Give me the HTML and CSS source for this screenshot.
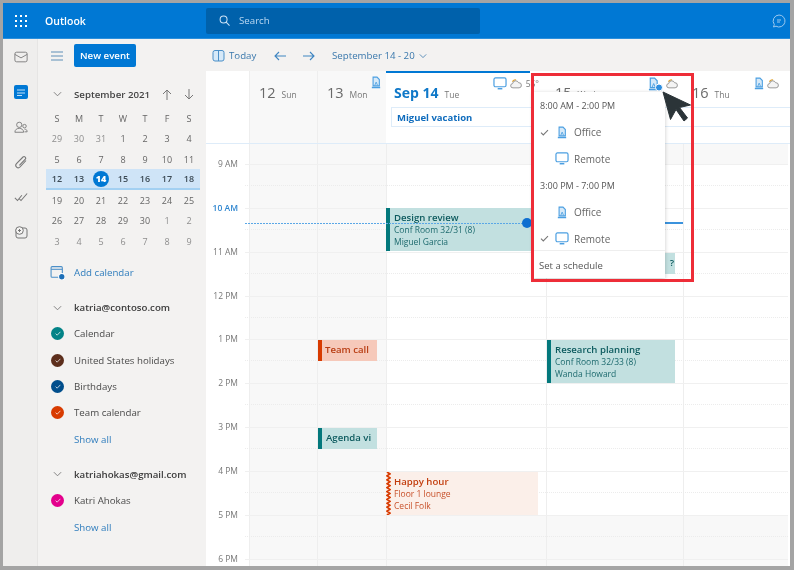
FILE: index.html
```html
<!DOCTYPE html>
<html lang="en">

<head>
  <meta charset="UTF-8">
  <title>Outlook calendar</title>
  <link rel="stylesheet" href="styles.css">
</head>

<body>
  <!-- Iconos reutilizados -->
  <svg class="defs" aria-hidden="true">
    <symbol id="office" viewBox="0 0 12 15">
      <path d="M2.500 1h4.700L10 4v7.500H2.500z" fill="#d6e9f8" stroke="#4b9fe1" stroke-width="1.300" />
      <path d="M1 13.500h10" stroke="#4b9fe1" stroke-width="1.800" />
      <path d="M4.500 11l1.700-4 1.700 4" fill="none" stroke="#4b9fe1" />
    </symbol>
    <symbol id="monitor" viewBox="0 0 15 14">
      <rect x="1" y="1" width="13" height="9.500" rx="1.600" fill="#fff" stroke="#4b9fe1" stroke-width="1.300" />
      <path d="M5 12.600h5" stroke="#4b9fe1" stroke-width="1.600" />
    </symbol>
    <symbol id="cloud" viewBox="0 0 14 11">
      <path d="M3 3a3 3 0 0 1 4-2" fill="none" stroke="#e0a32e" stroke-width="1.400" />
      <path d="M3.500 10a2.500 2.500 0 0 1-.4-5A3.600 3.600 0 0 1 10 4a3 3 0 0 1 .6 6z" fill="#f4f4f4" stroke="#8a8a8a" />
    </symbol>
    <symbol id="chev" viewBox="0 0 10 6">
      <path d="M1 1l4 4 4-4" fill="none" stroke="currentColor" stroke-width="1" />
    </symbol>
    <symbol id="tick" viewBox="0 0 10 8">
      <path d="M1 4.200l2.600 2.600L9 1.200" fill="none" stroke="currentColor" stroke-width="1.200" />
    </symbol>
  </svg>

  <div class="app">
    <header class="topbar">
      <svg class="waffle" viewBox="0 0 12 12" fill="#fff">
        <rect x="0" y="0" width="2" height="2" /><rect x="5" y="0" width="2" height="2" /><rect x="10" y="0" width="2" height="2" />
        <rect x="0" y="5" width="2" height="2" /><rect x="5" y="5" width="2" height="2" /><rect x="10" y="5" width="2" height="2" />
        <rect x="0" y="10" width="2" height="2" /><rect x="5" y="10" width="2" height="2" /><rect x="10" y="10" width="2" height="2" />
      </svg>
      <span class="brand">Outlook</span>
      <div class="search">
        <svg viewBox="0 0 12 12" fill="none" stroke="#cfe4f7" stroke-width="1.100">
          <circle cx="5" cy="5" r="3.800" /><path d="M7.800 7.800L11.500 11.500" />
        </svg>
        <span>Search</span>
      </div>
      <svg class="chat" viewBox="0 0 14 14" fill="none" stroke="#9cc8ee" stroke-width="1">
        <path d="M7 1a6 6 0 1 1-3 11.200L1.500 13l.8-2.500A6 6 0 0 1 7 1z" /><path d="M5 6h4M5 8h3" />
      </svg>
    </header>

    <div class="workspace">
      <nav class="rail">
        <svg viewBox="0 0 16 14" fill="none" stroke="#777"><rect x="1" y="1.500" width="14" height="11" rx="2" /><path d="M1 4l7 4 7-4" /></svg>
        <svg viewBox="0 0 14 14"><rect width="14" height="14" rx="2" fill="#0078d4" /><path d="M3 5h8M3 8h8M3 10.500h5" stroke="#bfe0f8" /></svg>
        <svg viewBox="0 0 16 14" fill="none" stroke="#777"><circle cx="6" cy="4.500" r="3" /><path d="M1 13c0-6 10-6 10 0z" /><circle cx="12" cy="6" r="2" /><path d="M12 9.500c2 0 3 1 3 3h-3" /></svg>
        <svg viewBox="0 0 14 14" fill="none" stroke="#777" stroke-width="1.100"><path d="M12 5.500L6 12a2.400 2.400 0 0 1-3.500-3.300L9 2a1.600 1.600 0 0 1 2.300 2.200L5.400 10.300" /></svg>
        <svg viewBox="0 0 16 14" fill="none" stroke="#777" stroke-width="1.200"><path d="M1 8l3 3 5-6M6 9l2 2 7-8" /></svg>
        <svg viewBox="0 0 14 14" fill="none" stroke="#777"><rect x="2" y="3" width="11" height="10" rx="2" fill="#eee" /><circle cx="5.500" cy="5.500" r="3.800" fill="#f4f3f2" /><path d="M4 5.500h3M5.500 4v3" /></svg>
      </nav>

      <aside class="sidebar">
        <div class="side-tools">
          <svg class="burger" viewBox="0 0 12 10" stroke="#5f8fb8"><path d="M0 1h12M0 5h12M0 9h12" /></svg>
          <button class="new-event" type="button">New event</button>
        </div>

        <div class="month-head">
          <svg class="chev"><use href="#chev" /></svg>
          <strong>September 2021</strong>
          <span class="arrows">
            <svg viewBox="0 0 10 11" fill="none" stroke="#777"><path d="M5 11V1M1 5l4-4 4 4" /></svg>
            <svg viewBox="0 0 10 11" fill="none" stroke="#777"><path d="M5 0v10M1 6l4 4 4-4" /></svg>
          </span>
        </div>

        <div class="mini-cal">
          <span>S</span><span>M</span><span>T</span><span>W</span><span>T</span><span>F</span><span>S</span>
          <span class="off">29</span><span class="off">30</span><span class="off">31</span><span>1</span><span>2</span><span>3</span><span>4</span>
          <span>5</span><span>6</span><span>7</span><span>8</span><span>9</span><span>10</span><span>11</span>
          <div class="cur-week">
            <span>12</span><span>13</span><span><b>14</b></span><span>15</span><span>16</span><span>17</span><span>18</span>
          </div>
          <span>19</span><span>20</span><span>21</span><span>22</span><span>23</span><span>24</span><span>25</span>
          <span>26</span><span>27</span><span>28</span><span>29</span><span>30</span><span class="off">1</span><span class="off">2</span>
          <span class="off">3</span><span class="off">4</span><span class="off">5</span><span class="off">6</span><span class="off">7</span><span class="off">8</span><span class="off">9</span>
        </div>

        <div class="add-cal">
          <svg viewBox="0 0 14 14" fill="none" stroke="#4b8fc8">
            <rect x="1" y="1.500" width="10.500" height="10" rx="1" /><path d="M1 4h10.500" />
            <circle cx="11" cy="11" r="3" fill="#1d6fb8" stroke="#fff" />
          </svg>
          <a>Add calendar</a>
        </div>

        <div class="account first">
          <svg class="chev"><use href="#chev" /></svg>
          <strong>katria@contoso.com</strong>
        </div>
        <ul class="cal-list">
          <li><span class="dot teal"><svg><use href="#tick" /></svg></span>Calendar</li>
          <li><span class="dot brown"><svg><use href="#tick" /></svg></span>United States holidays</li>
          <li><span class="dot navy"><svg><use href="#tick" /></svg></span>Birthdays</li>
          <li><span class="dot orange"><svg><use href="#tick" /></svg></span>Team calendar</li>
          <li class="show-all"><a>Show all</a></li>
        </ul>

        <div class="account">
          <svg class="chev"><use href="#chev" /></svg>
          <strong>katriahokas@gmail.com</strong>
        </div>
        <ul class="cal-list">
          <li><span class="dot pink"><svg><use href="#tick" /></svg></span>Katri Ahokas</li>
          <li class="show-all"><a>Show all</a></li>
        </ul>
      </aside>

      <main class="calendar">
        <div class="cal-tools">
          <svg class="today-icon" viewBox="0 0 13 13" fill="none" stroke="#4b8fc8"><rect x="1" y="1.500" width="11" height="10.500" rx="2" fill="#d6e9f8" /><path d="M6.500 1.500V12" /></svg>
          <span class="today">Today</span>
          <svg class="nav-arrow prev" viewBox="0 0 12 10" fill="none" stroke="#3f85c2" stroke-width="1.100"><path d="M12 5H1M5 1L1 5l4 4" /></svg>
          <svg class="nav-arrow" viewBox="0 0 12 10" fill="none" stroke="#3f85c2" stroke-width="1.100"><path d="M0 5h11M7 1l4 4-4 4" /></svg>
          <span class="range">September 14 - 20</span>
          <svg class="chev range-chev"><use href="#chev" /></svg>
        </div>

        <div class="week">
          <div class="week-head">
            <div class="head-day blank"></div>
            <div class="head-day weekend"><em>12</em><small>Sun</small></div>
            <div class="head-day weekend"><em>13</em><small>Mon</small>
              <svg class="ic office-ic"><use href="#office" /></svg>
            </div>
            <div class="head-day today-col"><em>Sep 14</em><small>Tue</small>
              <span class="head-icons">
                <svg class="ic monitor-ic"><use href="#monitor" /></svg>
                <svg class="ic cloud-ic"><use href="#cloud" /></svg>
                <small class="temp">55°</small>
              </span>
            </div>
            <div class="head-day wed-col"><em>15</em><small>Wed</small>
              <span class="head-icons">
                <svg class="ic wed-office" viewBox="0 0 15 14"><use href="#office" width="11" height="14" /><circle cx="11" cy="10.500" r="3.500" fill="#2f8fe0" stroke="#fff" /></svg>
                <svg class="ic cloud-ic"><use href="#cloud" /></svg>
              </span>
            </div>
            <div class="head-day thu-col"><em>16</em><small>Thu</small>
              <span class="head-icons">
                <svg class="ic office-ic"><use href="#office" /></svg>
                <svg class="ic cloud-ic"><use href="#cloud" /></svg>
              </span>
            </div>
            <div class="allday"><span>Miguel vacation</span></div>
          </div>

          <div class="week-body">
            <div class="cols">
              <div class="col time-col"></div>
              <div class="col c-sun"></div>
              <div class="col c-mon"></div>
              <div class="col c-tue"></div>
              <div class="col c-wed"></div>
              <div class="col c-thu"></div>
            </div>

            <div class="hours">
              <div class="hour"><span>9 AM</span><div class="rule"></div></div>
              <div class="hour now"><span>10 AM</span><div class="rule"></div></div>
              <div class="hour"><span>11 AM</span><div class="rule"></div></div>
              <div class="hour"><span>12 PM</span><div class="rule"></div></div>
              <div class="hour"><span>1 PM</span><div class="rule"></div></div>
              <div class="hour"><span>2 PM</span><div class="rule"></div></div>
              <div class="hour"><span>3 PM</span><div class="rule"></div></div>
              <div class="hour"><span>4 PM</span><div class="rule"></div></div>
              <div class="hour"><span>5 PM</span><div class="rule"></div></div>
              <div class="hour"><span>6 PM</span><div class="rule"></div></div>
            </div>

            <!-- Eventos: su posicion es la hora y el dia -->
            <div class="event teal-ev ev-design"><b>Design review</b><span>Conf Room 32/31 (8)</span><span>Miguel Garcia</span></div>
            <div class="event teal-ev ev-hidden"><b>?</b></div>
            <div class="event red-ev ev-team"><b>Team call</b></div>
            <div class="event teal-ev ev-agenda"><b>Agenda vi</b></div>
            <div class="event teal-ev ev-research"><b>Research planning</b><span>Conf Room 32/33 (8)</span><span>Wanda Howard</span></div>
            <div class="event tent-ev ev-happy">
              <svg class="zigzag" viewBox="0 0 5 44" preserveAspectRatio="none"><polyline points="1,0 4,2 1,4 4,6 1,8 4,10 1,12 4,14 1,16 4,18 1,20 4,22 1,24 4,26 1,28 4,30 1,32 4,34 1,36 4,38 1,40 4,42 1,44" fill="none" stroke="#d83b01" stroke-width="1.700" /></svg>
              <b>Happy hour</b><span>Floor 1 lounge</span><span>Cecil Folk</span>
            </div>

            <div class="now-dash"></div>
            <div class="now-solid"></div>
            <div class="now-dot"></div>
          </div>
        </div>

        <div class="popup">
          <div class="pop-time">8:00 AM - 2:00 PM</div>
          <div class="pop-item"><svg class="pop-check"><use href="#tick" /></svg><svg class="ic office-ic"><use href="#office" /></svg><span>Office</span></div>
          <div class="pop-item"><i class="pop-check"></i><svg class="ic monitor-ic"><use href="#monitor" /></svg><span>Remote</span></div>
          <div class="pop-time">3:00 PM - 7:00 PM</div>
          <div class="pop-item"><i class="pop-check"></i><svg class="ic office-ic"><use href="#office" /></svg><span>Office</span></div>
          <div class="pop-item"><svg class="pop-check"><use href="#tick" /></svg><svg class="ic monitor-ic"><use href="#monitor" /></svg><span>Remote</span></div>
          <div class="pop-foot">Set a schedule</div>
        </div>

        <div class="callout"></div>
        <svg class="pointer" viewBox="0 0 30 33"><path d="M1 1l7.500 27.500 5.500-10 8 11.500 3.500-3-8-10.500L28.500 14z" fill="#2b3438" stroke="#2b3438" stroke-linejoin="round" /></svg>
      </main>
    </div>
  </div>
</body>

</html>
```

FILE: styles.css
```css
* {
  margin: 0;
  padding: 0;
  box-sizing: border-box;
}

html,
body {
  height: 100%;
  overflow: hidden;
}

body {
  background: #a4a4a4;
  padding: 3px 4px 4px 3px;
  font-family: "Open Sans", "Noto Sans", sans-serif;
  font-size: 9.700px;
  color: #4a4a4a;
}

.defs {
  display: none;
}

/* La captura original esta algo borrosa */
.app {
  height: 100%;
  display: flex;
  flex-direction: column;
  background: #fff;
  filter: blur(0.55px);
}

/* Barra superior */
.topbar {
  height: 36px;
  flex: none;
  background: #0078d4;
  display: flex;
  align-items: center;
  color: #fff;
  border-bottom: 1px solid #2b8fdc;
}

.waffle {
  width: 12px;
  height: 12px;
  margin-left: 12px;
}

.brand {
  width: 161px;
  margin-left: 18px;
  font-size: 10.500px;
  font-weight: 600;
}

.search {
  width: 274px;
  height: 26px;
  background: #0061ab;
  border-radius: 2px;
  display: flex;
  align-items: center;
  gap: 9px;
  padding-left: 13px;
  color: #b9d8f2;

  svg {
    width: 11px;
    height: 11px;
  }
}

.chat {
  width: 14px;
  height: 14px;
  margin-left: auto;
  margin-right: 4px;
}

.workspace {
  flex: 1;
  display: flex;
  min-height: 0;
}

/* Barra de iconos de la izquierda */
.rail {
  width: 35px;
  flex: none;
  background: #efeeed;
  border-right: 1px solid #e6e5e4;
  display: flex;
  flex-direction: column;
  align-items: center;
  padding: 11px 0 0 1px;
  gap: 21px;

  svg {
    width: 14px;
    height: 14px;
  }
}

/* Panel lateral */
.sidebar {
  width: 168px;
  flex: none;
  background: #f3f2f1;
  padding-left: 8px;
}

.side-tools {
  height: 32px;
  display: flex;
  align-items: center;
  padding-top: 1px;
}

.burger {
  width: 12px;
  height: 10px;
  margin: 0 11px 0 5px;
}

.new-event {
  width: 62px;
  height: 23px;
  border: none;
  border-radius: 2px;
  background: #0078d4;
  color: #fff;
  font: 600 9.700px "Open Sans", sans-serif;
}

.chev {
  width: 9px;
  height: 6px;
  color: #777;
}

.month-head {
  height: 20px;
  margin-top: 13px;
  display: flex;
  align-items: center;

  .chev {
    margin: 0 12px 0 7px;
  }

  strong {
    font-weight: 600;
    color: #444;
  }
}

.arrows {
  display: flex;
  gap: 12px;
  margin-left: 12px;

  svg {
    width: 10px;
    height: 11px;
  }
}

.mini-cal {
  width: 154px;
  margin-top: 4px;
  display: grid;
  grid-template-columns: repeat(7, 22px);
  grid-auto-rows: 20.500px;
  place-items: center;
  font-size: 9px;
  color: #666;

  .off {
    color: #8e8e8e;
  }
}

.cur-week {
  grid-column: 1 / -1;
  width: 100%;
  height: 21px;
  display: grid;
  grid-template-columns: repeat(7, 22px);
  place-items: center;
  background: #cfe4f7;
  border-bottom: 2px solid #a3d0f2;
  color: #3c4a55;
  font-weight: 600;

  b {
    width: 16px;
    height: 16px;
    border-radius: 50%;
    background: #0078d4;
    color: #fff;
    display: grid;
    place-items: center;
    font-size: 9px;
  }
}

.add-cal {
  height: 20px;
  margin-top: 11px;
  display: flex;
  align-items: center;
  gap: 9px;
  padding-left: 4px;

  svg {
    width: 15px;
    height: 15px;
  }
}

a {
  color: #2f7dbd;
}

.account {
  height: 20px;
  margin-top: 12px;
  display: flex;
  align-items: center;

  &.first {
    margin-top: 15px;
  }

  .chev {
    margin: 0 12px 0 7px;
  }

  strong {
    font-weight: 600;
    color: #3a3a3a;
  }
}

.cal-list {
  list-style: none;
  margin-top: 3px;

  li {
    height: 26.400px;
    display: flex;
    align-items: center;
    gap: 10px;
    padding-left: 5px;
  }

  .show-all {
    padding-left: 28px;
  }
}

.dot {
  width: 13px;
  height: 13px;
  border-radius: 50%;
  display: grid;
  place-items: center;
  color: #fff;

  svg {
    width: 6px;
    height: 5px;
  }
}

.teal { background: #038387; }
.brown { background: #5c2e1c; }
.navy { background: #004e8c; }
.orange { background: #d83b01; }
.pink { background: #e3008c; }

/* Calendario */
.calendar {
  flex: 1;
  min-width: 0;
  position: relative;
  display: flex;
  flex-direction: column;
}

.cal-tools {
  height: 32px;
  flex: none;
  background: #f3f2f1;
  display: flex;
  align-items: center;
  padding: 1px 0 0 6px;
  color: #3a78ac;
}

.today-icon {
  width: 13px;
  height: 13px;
  margin-right: 4px;
}

.today {
  width: 27px;
}

.nav-arrow {
  width: 12px;
  height: 10px;
  margin-right: 17px;

  &.prev {
    margin-left: 18px;
  }
}

.range-chev {
  width: 8px;
  margin-left: 4px;
  color: #3a78ac;
}

.week {
  flex: 1;
  min-height: 0;
  display: flex;
  flex-direction: column;
}

.week-head {
  height: 73px;
  flex: none;
  display: grid;
  grid-template-columns: 43px 68px 69px 160px 137px 1fr;
  grid-template-rows: 36px 20px 1fr;
  border-bottom: 1px solid #deecf9;
}

.head-day {
  grid-row: 1 / 4;
  display: flex;
  align-items: baseline;
  gap: 6px;
  padding: 13px 0 0 9px;
  position: relative;

  em {
    font-style: normal;
    font-size: 14.500px;
    line-height: 18px;
    color: #6a6a6a;
  }

  small {
    font-size: 8.500px;
    color: #777;
  }

  &.blank {
    grid-column: 1;
    background: #fff;
  }

  &.weekend {
    background: #f8f8f8;
    border-left: 1px solid #eee;
  }

  &:nth-child(2) { grid-column: 2; }
  &:nth-child(3) { grid-column: 3; }

  /* La barra azul termina antes del final de la columna */
  &.today-col {
    grid-column: 4;
    background: linear-gradient(#0078d4, #0078d4) top left / 144px 2px no-repeat;
    padding-left: 8px;

    em {
      color: #0f78c8;
      font-size: 14px;
      font-weight: 700;
    }
  }

  &.wed-col { grid-column: 5; }
  &.thu-col { grid-column: 6; }
}

.allday {
  grid-column: 4 / -1;
  grid-row: 2;
  margin-left: 5px;
  background: #fff;
  border: 1px solid #deecf9;
  border-right: none;
  display: flex;
  align-items: center;
  padding-left: 5px;
  color: #0f6cbd;
  font-size: 9.500px;
  font-weight: 700;
}

.ic {
  display: block;
}

.office-ic {
  width: 10px;
  height: 13px;
}

.monitor-ic {
  width: 14px;
  height: 13px;
}

.cloud-ic {
  width: 12px;
  height: 10px;
}

.head-day > .office-ic {
  position: absolute;
  top: 5px;
  right: 5px;
}

.head-icons {
  position: absolute;
  top: 6px;
  right: 11px;
  display: flex;
  align-items: center;
  gap: 3px;
}

.today-col .head-icons {
  right: 7px;
}

.wed-col .head-icons {
  right: 5px;
}

.wed-office {
  width: 15px;
  height: 14px;
}

.temp {
  margin-left: 1px;
}

.week-body {
  flex: 1;
  min-height: 0;
  position: relative;
  display: grid;
  overflow: hidden;
}

.cols,
.hours {
  grid-area: 1 / 1;
}

.cols {
  display: grid;
  grid-template-columns: 43px 68px 69px 160px 137px 1fr;
  margin-right: 2px;
}

.col {
  background: linear-gradient(#f8f8f8 20px, #fff 20px, #fff 371px, #f8f8f8 371px);
  border-left: 1px solid #eeeeee;
}

.time-col {
  background: #fff;
  border-left: none;
}

.c-sun,
.c-mon {
  background: #f8f8f8;
}

.hours {
  padding-top: 20px;
  margin-right: 2px;
}

.hour {
  height: 43.850px;
  display: flex;

  span {
    width: 32px;
    flex: none;
    margin-top: -7px;
    height: 14px;
    line-height: 14px;
    text-align: right;
    font-size: 8.500px;
    color: #777;
  }

  &.now span {
    color: #2f86d0;
    font-weight: 600;
  }
}

.rule {
  flex: 1;
  margin-left: 7px;
  height: 22px;
  border-top: 1px solid #f0f0f0;
  border-bottom: 1px dotted #ececec;
}

/* Eventos */
.event {
  position: absolute;
  display: flex;
  flex-direction: column;
  padding: 4px 0 0 8px;
  overflow: hidden;
  white-space: nowrap;
  font-size: 8.500px;
  line-height: 12px;

  b {
    font-size: 9.600px;
    font-weight: 600;
  }
}

.teal-ev {
  background: #c2e0e0;
  border-left: 4px solid #03787c;
  color: #1d6a6e;
  padding-left: 4px;

  b {
    color: #0c5a5e;
  }
}

.red-ev {
  background: #f6c9ba;
  border-left: 4px solid #d83b01;
  padding-left: 3px;
  color: #b83c12;
}

.tent-ev {
  background: #fbefe9;
  color: #c8502a;
  padding-left: 8px;

  b {
    color: #c23c0c;
  }
}

.zigzag {
  position: absolute;
  left: 0;
  top: 0;
  width: 5px;
  height: 100%;
}

.ev-design { left: 180px; top: 64px; width: 150px; height: 43px; }
.ev-hidden { left: 341px; top: 109px; width: 128px; height: 21px; align-items: flex-end; padding-right: 1px; }
.ev-team { left: 112px; top: 196px; width: 59px; height: 21px; }
.ev-agenda { left: 112px; top: 284px; width: 59px; height: 21px; }
.ev-research { left: 341px; top: 196px; width: 128px; height: 43px; padding-left: 4px; }
.ev-happy { left: 180px; top: 328px; width: 152px; height: 43px; }

/* Linea de la hora actual */
.now-dash {
  position: absolute;
  left: 39px;
  top: 79px;
  width: 282px;
  height: 1px;
  background: repeating-linear-gradient(to right, #5aa7e6 0 2px, transparent 2px 3px);
}

.now-solid {
  position: absolute;
  left: 321px;
  top: 78px;
  width: 156px;
  height: 2px;
  background: #3b93dd;
}

.now-dot {
  position: absolute;
  left: 316px;
  top: 74px;
  width: 10px;
  height: 10px;
  border-radius: 50%;
  background: #0f6fd0;
}

/* Menu desplegable */
.popup {
  position: absolute;
  left: 327px;
  top: 53px;
  width: 132px;
  height: 186px;
  background: #fff;
  box-shadow: 0 1px 4px rgba(0, 0, 0, 0.22);
  z-index: 2;
}

.pop-time {
  height: 27px;
  display: flex;
  align-items: center;
  padding-left: 7px;
  font-size: 9px;
  color: #555;
}

.pop-item {
  height: 26.500px;
  display: flex;
  align-items: center;
  color: #666;
  font-size: 10px;

  .ic {
    margin-right: 5px;
  }

  .office-ic {
    margin-left: 2px;
    margin-right: 7px;
  }
}

.pop-check {
  width: 9px;
  height: 7px;
  margin-left: 7px;
  margin-right: 6px;
  color: #777;
}

.pop-foot {
  margin-top: -2px;
  height: 30px;
  border-top: 1px solid #eee;
  display: flex;
  align-items: center;
  padding-left: 6px;
  font-size: 9.500px;
  color: #555;
}

.callout {
  position: absolute;
  left: 325px;
  top: 34px;
  width: 163px;
  height: 209px;
  border: 3px solid #ee2d38;
  z-index: 4;
}

.pointer {
  position: absolute;
  left: 456px;
  top: 52px;
  width: 30px;
  height: 33px;
  z-index: 5;
}
```
